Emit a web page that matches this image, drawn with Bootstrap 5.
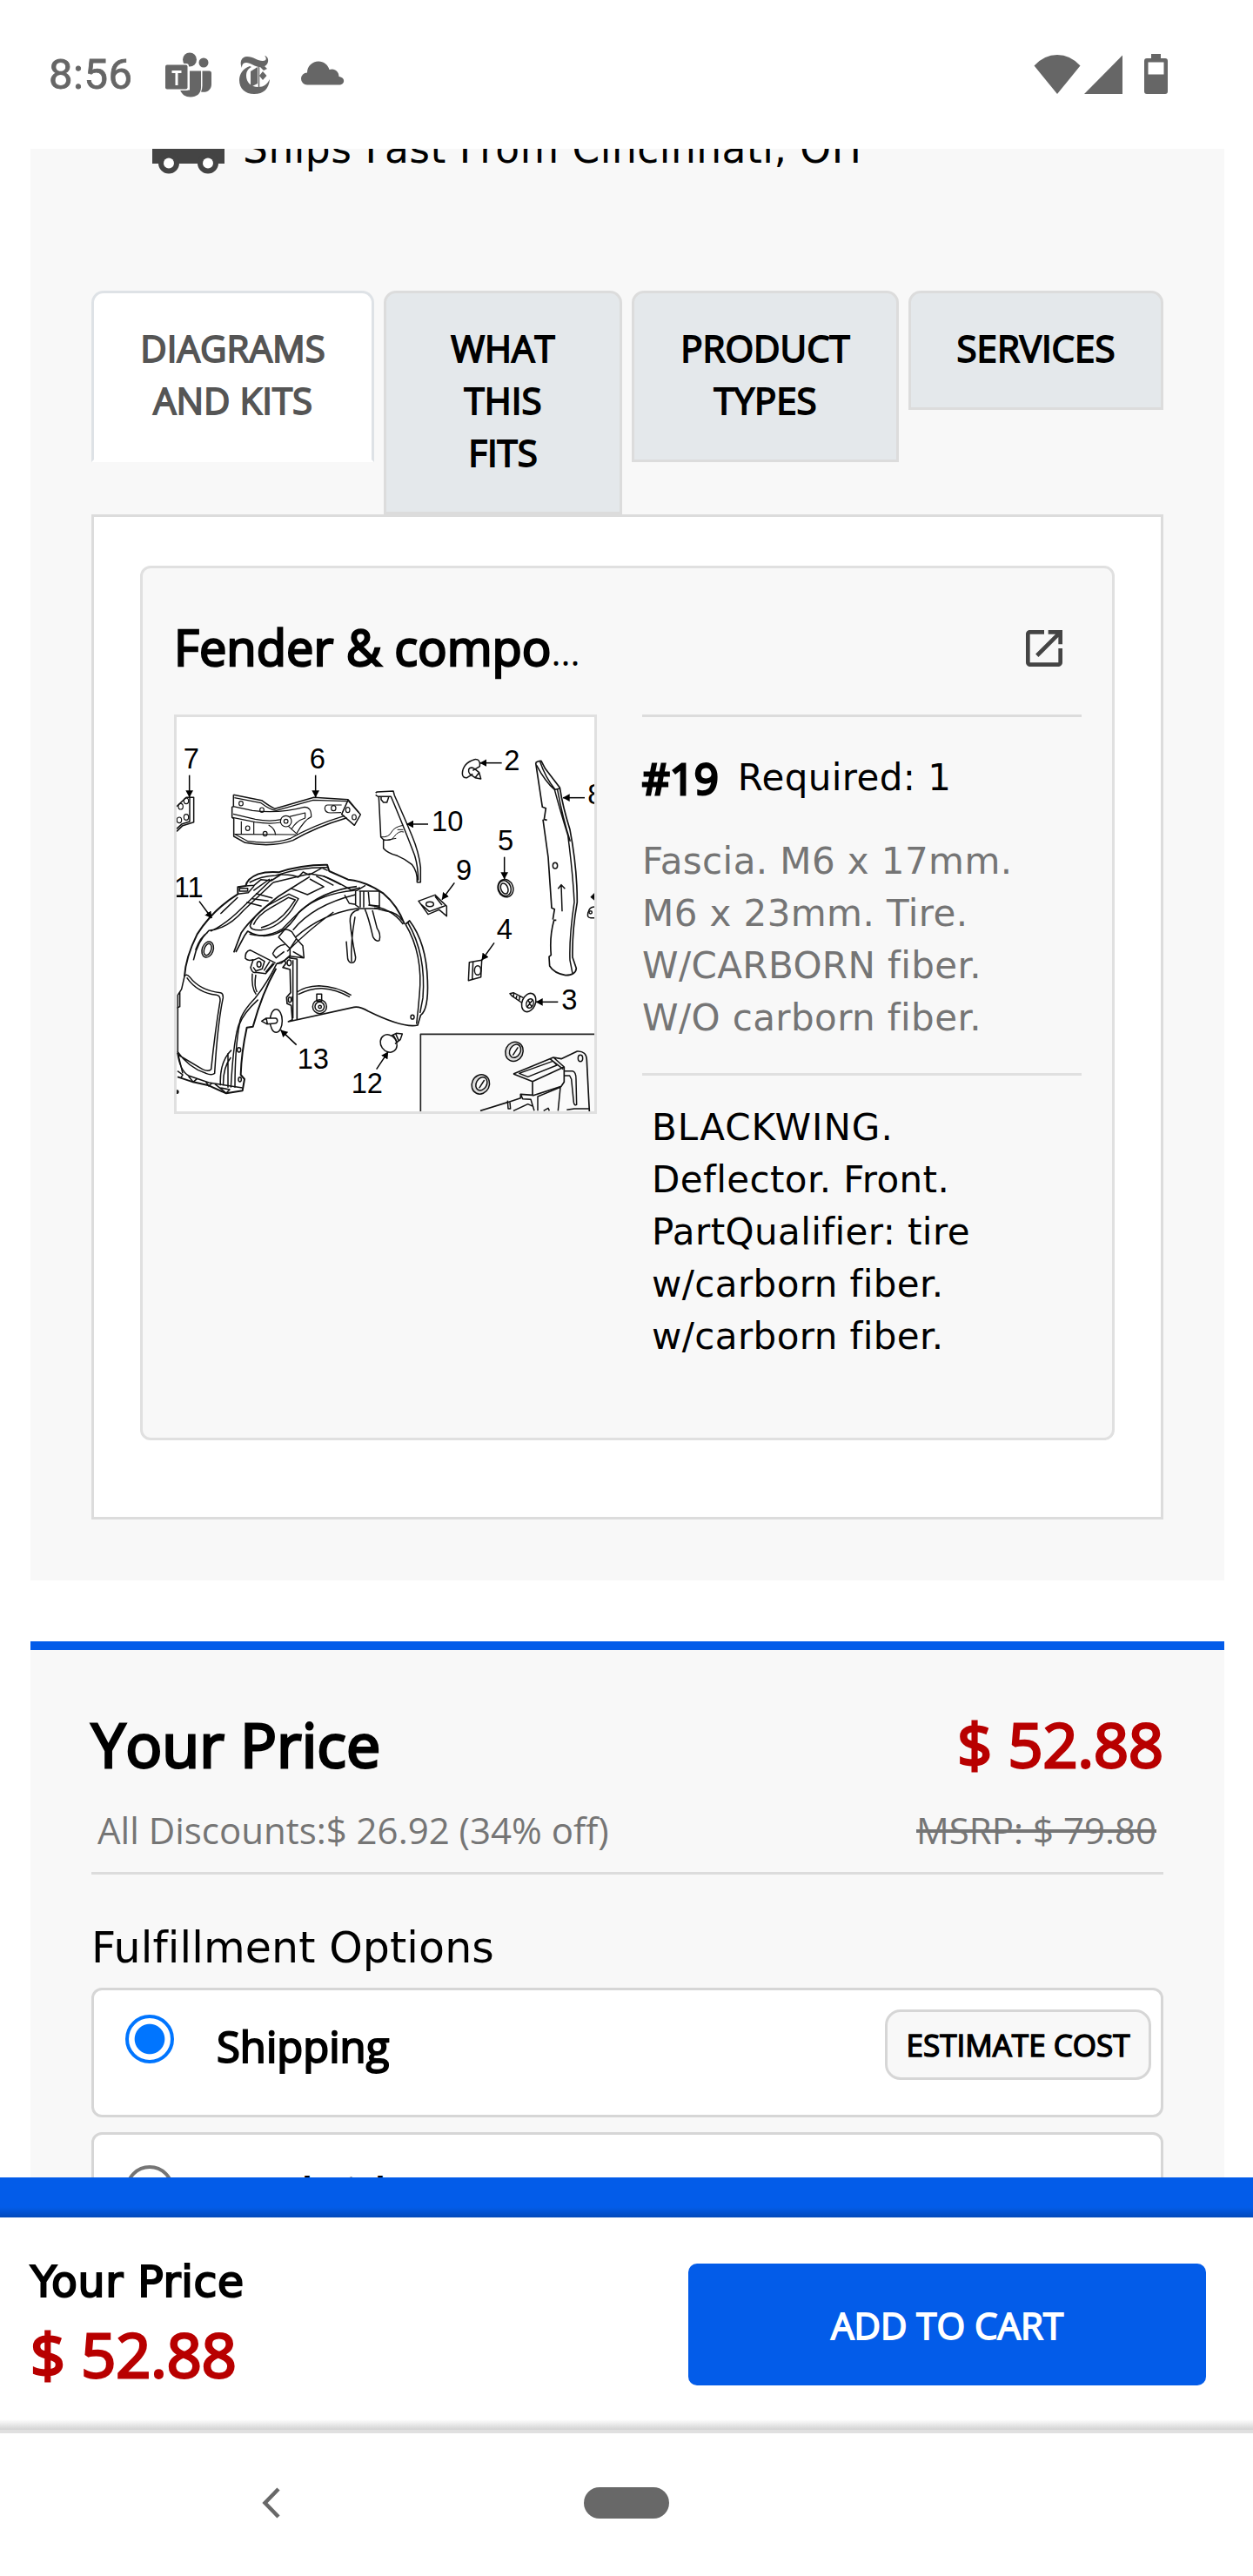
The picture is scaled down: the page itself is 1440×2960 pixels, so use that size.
<!DOCTYPE html>
<html lang="en">

<head>
    <meta charset="UTF-8">
    <meta name="viewport" content="width=device-width, initial-scale=1.0">
    <title>Part Details</title>
    <link href="https://cdn.jsdelivr.net/npm/bootstrap@5.3.3/dist/css/bootstrap.min.css" rel="stylesheet">
    <script src="https://cdn.jsdelivr.net/npm/bootstrap@5.3.3/dist/js/bootstrap.bundle.min.js"></script>

    <style>
        body {
            width: 1440px;
            height: 2960px;
            overflow: hidden;
            color: #000;
            background-color: #fff;
            font-family: "DejaVu Sans", sans-serif;
            font-size: 42px;
            line-height: 60px;
        }

        svg {
            display: block;
            flex-shrink: 0;
        }

        .heavy {
            font-family: "Open Sans", sans-serif;
            font-weight: 400;
            letter-spacing: 0;
            -webkit-text-stroke: 0.042em currentColor;
        }

        .status-bar {
            height: 171px;
            padding: 0 98px 0 56px;
            color: #666;
        }

        .clock {
            font-family: Roboto, sans-serif;
            font-size: 49px;
            line-height: 60px;
            letter-spacing: 0.5px;
            margin-top: 56px;
            width: 134px;
            -webkit-text-stroke: 0.8px currentColor;
        }

        .teams-icon { margin-top: 60px; }
        .times-icon { margin: 63px 0 0 31px; }
        .cloud-icon { margin: 70px 0 0 35px; }
        .signal-icons { margin-top: 62px; }
        .cell-icon { margin-left: 4px; }
        .battery-icon { margin-left: 24px; }

        .panel-gray {
            background-color: #f8f8f8;
            margin-left: 35px;
            width: 1372px;
            padding: 0 70px;
            overflow: hidden;
        }

        .product {
            height: 1645px;
        }

        .ships {
            margin-top: -29px;
            padding-left: 70px;
            gap: 21px;
            font-size: 45.5px;
            letter-spacing: 0.5px;
        }

        .part-tabs {
            margin-top: 132px;
            height: 257px;
            border: 0;
            gap: 11px;
        }

        .part-tabs .nav-link {
            margin: 0;
            border: 3px solid #dcdcdc;
            border-radius: 14px 14px 0 0;
            padding: 33px 0 38px;
            background-color: #e4e8eb;
            color: #000;
            text-align: center;
        }

        .part-tabs .nav-link.active {
            background-color: #fff;
            border-bottom-color: #fff;
            color: #555;
        }

        .tab-a { width: 325px; }
        .tab-b { width: 274px; }
        .tab-c { width: 307px; }
        .tab-d { width: 293px; }

        .tab-panel {
            height: 1155px;
            border: 3px solid #dcdcdc;
            padding: 56px 53px;
            background-color: #fff;
        }

        .diagram-card {
            height: 1005px;
            border: 3px solid #e0e0e0;
            border-radius: 12px;
            background-color: #f8f8f8;
            padding: 52px 35px 0 36px;
        }

        .diagram-title {
            font-size: 56px;
            line-height: 76px;
            height: 78px;
        }

        .dots {
            font-size: 42px;
            line-height: 1;
            -webkit-text-stroke: 0;
        }

        .open-icon {
            margin: 12px 15px 0 0;
        }

        .diagram-body {
            margin-top: 38px;
            gap: 52px;
        }

        .diagram {
            border: 3px solid #e0e0e0;
            background-color: #fff;
            width: 486px;
            height: 459px;
        }

        .diagram text {
            font-family: "Liberation Sans", sans-serif;
            font-size: 98px;
            fill: #000;
            stroke: none;
        }

        .specs {
            width: 505px;
            border-top: 3px solid #dcdcdc;
            letter-spacing: 0.4px;
        }

        .callout {
            margin-top: 40px;
            gap: 22px;
        }

        .callout .heavy {
            font-size: 49px;
            -webkit-text-stroke-width: 0.06em;
        }

        .gray-text {
            color: #757575;
        }

        .notes {
            margin-top: 36px;
            padding-bottom: 33px;
            border-bottom: 3px solid #e0e0e0;
        }

        .qualifiers {
            margin-top: 30px;
            padding-left: 11px;
        }

        .wide {
            letter-spacing: 1px;
        }

        .pricing {
            margin-top: 70px;
            height: 616px;
            border-top: 10px solid #035ce9;
            padding-top: 60px;
        }

        .price-row {
            font-size: 70px;
            line-height: 96px;
        }

        .red {
            color: #b80000;
        }

        .discount-row {
            font-family: "Open Sans", sans-serif;
            margin-top: 21px;
            padding: 0 8px 18px 7px;
            border-bottom: 3px solid #dcdcdc;
        }

        .fulfillment {
            font-size: 49px;
            letter-spacing: 0.1px;
            margin: 55px 0 15px;
        }

        .ship-option {
            height: 149px;
            border: 3px solid #d6d6d6;
            border-radius: 12px;
            background-color: #fff;
            padding: 0 11px 0 36px;
            margin-bottom: 17px;
        }

        .radio {
            width: 56px;
            height: 56px;
            border: 4px solid #757575;
            border-radius: 50%;
            margin: 28px 49px 0 0;
        }

        .radio.checked {
            border-color: #0075ff;
            background: radial-gradient(circle, #0075ff 16.8px, #fff 17.8px);
        }

        .option-name {
            font-size: 49px;
            margin-top: 34px;
        }

        .estimate {
            margin: 22px 0 0 auto;
            width: 306px;
            height: 81px;
            border: 3px solid #d6d6d6;
            border-radius: 18px;
            padding: 0;
            background-color: #f8f8f8;
            color: #000;
            font-size: 35px;
            line-height: 75px;
        }

        .pickup .radio {
            margin-top: 35px;
        }

        .pickup .option-name {
            font-size: 45.5px;
            margin-top: 35px;
        }

        .blue-band {
            height: 46px;
            background-color: #035ce9;
            background-image: linear-gradient(to top, rgba(0, 0, 0, .2), rgba(0, 0, 0, 0) 12px);
        }

        .cart-bar {
            height: 248px;
            padding: 40px 54px 0 35px;
            border-bottom: 4px solid #e0e0e0;
            background: linear-gradient(to top, #d2d2d2, #fff 12px);
        }

        .cart-label {
            font-family: "DejaVu Sans", sans-serif;
            font-size: 49px;
            line-height: 70px;
            letter-spacing: 0.6px;
        }

        .cart-price {
            font-size: 70px;
            line-height: 90px;
            margin-top: 2px;
        }

        .add-btn {
            width: 595px;
            height: 140px;
            margin-top: 13px;
            border: 0;
            border-radius: 10px;
            background-color: #035ce9;
            color: #fff;
            font-size: 42px;
            line-height: 60px;
            padding: 2px 0 0;
        }

        .android-nav {
            height: 164px;
            padding: 62px 0 0 301px;
            gap: 349px;
        }

        .pill {
            width: 98px;
            height: 36px;
            border-radius: 18px;
            background-color: #686868;
        }
    </style>

</head>

<body>

    <div class="status-bar d-flex align-items-start">
        <div class="clock">8:56</div>
        <!-- Teams -->
        <svg class="teams-icon" width="54" height="52" viewBox="0 0 54 52" fill="#666">
            <circle cx="28" cy="8.500" r="8" />
            <circle cx="44" cy="12" r="5.500" />
            <path d="M28 21.500h13v19c0 7-5 11-12 11-6 0-10-3-12-8h11z" />
            <path d="M42.500 21.500h8q2.500 0 2.500 2.500v13c0 6-5 10-12 8.500q1.500-3 1.500-7z" />
            <rect x="-1" y="13" width="28" height="31" rx="3" fill="#fff" />
            <rect x="0" y="14.500" width="25.500" height="28" rx="2" />
            <path d="M7.500 22.500h11M13 22.500v15.500" stroke="#fff" stroke-width="3" />
        </svg>
        <!-- Times -->
        <svg class="times-icon" width="36" height="46" viewBox="0 0 36 46" fill="#666">
            <path d="M3 15C0 9 2 2 9 2c7 0 12 5 18 5 4 0 5-3 2-6 6 1 6 12-3 13C19 15 13 9 8 9c-4 0-5 3-5 6z" />
            <path d="M12 13C4 16 0 22 0 29c0 10 7 16 17 16 11 0 17-6 18-17-3 6-7 9-13 9C13 37 8 31 8 24c0-5 2-8 6-10z" />
            <path d="M13 19l8-5v19l-8 4z" />
            <path d="M22.500 14v24" stroke="#666" stroke-width="1.500" />
            <path d="M27 19l4.500 5-4.500 5-4-5zM24 14l5-1 3 3-4 2z" />
        </svg>
        <svg class="cloud-icon" width="50" height="28" viewBox="0 0 50 28" fill="#666">
            <path d="M7 27.500a7 7 0 0 1 0-14C7 6 13 .5 20 .5c6 0 11 4 12.500 9.500 6-2 11 2 11 8 8 1 7 9.500 0 9.500z" />
        </svg>
        <div class="signal-icons d-flex ms-auto">
            <svg width="54" height="48" viewBox="0 0 54 48" fill="#666">
                <path d="M.5 13.500Q12 1 27 1t26.500 12.500L27 46z" />
            </svg>
            <svg class="cell-icon" width="45" height="48" viewBox="0 0 45 48" fill="#666">
                <path d="M0 46L44 1.500V46z" />
            </svg>
            <svg class="battery-icon" width="27" height="48" viewBox="0 0 27 48" fill="#666">
                <path fill-rule="evenodd"
                    d="M8 0h11v5h5q3 0 3 3v35q0 3-3 3H3q-3 0-3-3V8q0-3 3-3h5zM4.500 9.500v14h18v-14z" />
            </svg>
        </div>
    </div>

    <div class="panel-gray product">
        <div class="ships d-flex">
            <svg width="83" height="60" viewBox="0 0 83 60">
                <path d="M0 3h52v8h16l15 16v19H0z" fill="#444" />
                <circle cx="19" cy="45.500" r="12" fill="#444" />
                <circle cx="64" cy="45.500" r="12" fill="#444" />
                <circle cx="19" cy="45.500" r="6" fill="#fff" />
                <circle cx="64" cy="45.500" r="6" fill="#fff" />
            </svg>
            <div class="text-nowrap">Ships Fast From Cincinnati, OH</div>
        </div>

        <div class="nav nav-tabs part-tabs align-items-start flex-nowrap">
            <a class="nav-link active heavy tab-a">DIAGRAMS<br>AND KITS</a>
            <a class="nav-link heavy tab-b">WHAT<br>THIS<br>FITS</a>
            <a class="nav-link heavy tab-c">PRODUCT<br>TYPES</a>
            <a class="nav-link heavy tab-d">SERVICES</a>
        </div>

        <div class="tab-panel">
            <div class="diagram-card">
                <div class="d-flex justify-content-between align-items-start">
                    <div class="diagram-title heavy">Fender &amp; compo<span class="dots">...</span></div>
                    <svg class="open-icon" width="56" height="56" viewBox="0 0 24 24" fill="#444">
                        <path
                            d="M19 19H5V5h7V3H5c-1.110 0-2 .9-2 2v14c0 1.100.890 2 2 2h14c1.100 0 2-.9 2-2v-7h-2v7zM14 3v2h3.590l-9.830 9.830 1.410 1.410L19 6.410V10h2V3h-7z" />
                    </svg>
                </div>

                <div class="diagram-body d-flex align-items-start">
                    <div class="diagram">
                        <svg width="480" height="453" viewBox="39 42 1440 1359" preserveAspectRatio="none"
                            fill="none" stroke="#111" stroke-width="4.500" stroke-linejoin="round">
                            <defs>
                                <marker id="tip" viewBox="0 0 24 26" refX="23" refY="13" markerWidth="24"
                                    markerHeight="26" markerUnits="userSpaceOnUse" orient="auto">
                                    <path d="M0 0L24 13L0 26z" fill="#000" stroke="none" />
                                </marker>
                            </defs>

                            <!-- 7: bracket -->
                            <path d="M39 350L72 319H98V404L60 416L39 436M84 320V402L58 410L39 427" />
                            <g stroke-width="3.500">
                                <ellipse cx="72" cy="331" rx="8" ry="10" />
                                <ellipse cx="53" cy="350" rx="8" ry="10" />
                                <ellipse cx="72" cy="387" rx="8" ry="10" />
                                <ellipse cx="48" cy="397" rx="8" ry="10" />
                            </g>

                            <!-- 6: rail -->
                            <path d="M235 310L332 329Q360 350 378 358L512 319L630 326L673 378L652 415L608 377L630 328" />
                            <path d="M235 310V350L230 352V388L236 392V453L275 475Q370 492 440 467Q520 420 626 389" />
                            <g stroke-width="3.500">
                                <path d="M238 320L330 338Q362 362 382 364L510 328L626 332M238 445L285 470Q370 482 432 460Q510 415 618 382" />
                                <path d="M234 350L300 364Q390 376 480 352Q504 352 503 386Q480 395 452 444M234 376L310 394Q360 404 400 395M232 388L310 404Q360 412 398 405M428 385L482 372V390Q450 400 434 430M424 418L455 446M240 446L450 447" />
                                <path d="M262 401V446M305 405V446M356 414Q378 426 380 448M608 345H560Q550 345 550 358Q552 372 570 372L606 371M630 330L668 372" />
                                <circle cx="416" cy="401" r="19" />
                                <circle cx="416" cy="401" r="7" />
                                <ellipse cx="261" cy="340" rx="7" ry="8" />
                                <ellipse cx="333" cy="362" rx="7" ry="8" />
                                <ellipse cx="284" cy="425" rx="7" ry="8" />
                                <ellipse cx="344" cy="444" rx="7" ry="8" />
                                <ellipse cx="580" cy="356" rx="8" ry="9" />
                                <ellipse cx="629" cy="362" rx="7" ry="9" />
                                <ellipse cx="651" cy="387" rx="7" ry="9" />
                            </g>

                            <!-- 11: liner, outer shell -->
                            <path stroke-width="6" d="M66 936Q70 870 110 790Q165 705 250 652V628L277 624Q282 598 320 583Q350 574 390 577Q470 550 558 551L565 573L630 602Q690 607 752 650Q800 690 825 756" />
                            <path d="M277 624L306 622L330 602L365 606L398 585Q440 584 458 594L475 576L496 586L540 562L560 571M290 612Q330 590 380 588Q470 558 558 560" />
                            <path d="M250 652L286 647L306 624M256 632H284V642H256zM97 880Q110 815 150 778Q215 772 270 708L372 612M104 845Q120 800 146 784M156 780Q210 755 262 702L368 600M190 720L250 663" />
                            <path d="M66 936L56 980L43 1000V1200L60 1270M40 1045L50 1040V990" />
                            <path d="M372 612L498 582L545 590Q580 602 640 638L672 630M304 640L360 600M280 680L332 694M300 668L356 676M312 650L370 666" />
                            <path stroke-width="5" d="M236 853L262 785Q300 730 390 660L498 592M243 852L274 794L284 780Q340 812 400 780Q430 764 460 716Q540 640 660 626" />
                            <path d="M292 762Q300 730 352 692L426 652L459 668L436 706Q390 770 330 776Q296 778 292 762zM304 758Q318 725 362 700L424 664L448 672L428 700Q390 752 330 768" />
                            <path d="M432 632L490 654L548 626M498 600L545 626M520 590L580 622M545 590L606 620M290 790Q350 805 404 772Q440 735 470 706Q540 650 650 640M440 776Q510 690 656 654M450 800Q540 720 660 702H740M420 850Q500 770 580 714" />
                            <path d="M656 640V690L668 698M668 642H738V700M672 642V698M684 642V698M700 645L704 690L740 694M618 655L634 684L656 688M640 638L660 640L690 622" />
                            <ellipse cx="146" cy="843" rx="19" ry="28" transform="rotate(20 146 843)" />
                            <ellipse cx="146" cy="843" rx="12" ry="21" transform="rotate(20 146 843)" />
                            <path d="M390 800L410 776Q420 770 436 782L452 806L474 830L478 872L430 866L412 880L384 892Q350 960 310 1010Q262 1060 256 1095Q236 1140 226 1319M390 800L430 840L452 806M430 840V866M440 850L474 870M370 858Q382 830 412 826M370 858L382 872L410 850" />
                            <path d="M380 890L292 845Q274 850 276 874Q284 884 303 878L294 905Q300 925 310 922L346 926L376 892M340 916L360 884M346 922L372 890M303 880L322 872L342 884L334 910L312 917L303 904M300 926Q296 975 313 998M312 930Q305 970 316 990" />
                            <ellipse cx="323" cy="894" rx="7" ry="10" />
                            <path stroke-width="6" d="M382 908Q335 990 302 1109L281 1112Q262 1200 260 1275L273 1290L266 1330L210 1339L150 1312L96 1300L42 1282" />
                            <path d="M384 892L400 890L432 862M240 1319Q240 1180 256 1100Q270 1062 320 1016M190 1312Q186 1230 228 1190M200 1312Q198 1250 226 1215M216 1319V1200" />
                            <path d="M66 936Q72 925 84 938Q120 985 190 992Q200 994 199 1010Q180 1100 170 1270Q160 1278 140 1270Q80 1250 42 1195M74 940Q110 992 176 1000Q190 1002 189 1020Q172 1120 158 1256Q148 1266 128 1256L44 1206" />
                            <path d="M42 1200Q50 1260 80 1278L150 1302L266 1320M42 1262L60 1275L54 1285M80 1280L96 1300L110 1288M140 1300L150 1314L160 1304M170 1306L210 1338L222 1326L190 1320" />
                            <ellipse cx="254" cy="1189" rx="6" ry="8" />
                            <ellipse cx="257" cy="1291" rx="5" ry="8" />
                            <circle cx="40" cy="1334" r="5" fill="#222" />

                            <!-- 11: liner, inner side -->
                            <path d="M410 880L416 890L405 905L430 912L432 992L418 1008L420 1030L434 1036L438 1085L424 1092L650 1042Q670 1038 700 1056Q820 1115 870 1104L880 1070Q908 1050 904 950Q900 820 842 744L828 756M426 872L454 876V1086M438 1004V1022" stroke-width="5" />
                            <path d="M440 880V1080M828 756Q890 860 876 1000Q872 1050 866 1100M836 750Q900 860 888 1010L878 1062M820 756Q780 700 700 690" />
                            <path d="M454 990Q480 970 530 968Q590 970 641 1001M458 998Q500 976 540 977Q590 980 636 1007" />
                            <rect x="522" y="997" width="17" height="24" />
                            <circle cx="532" cy="1040" r="24" />
                            <circle cx="532" cy="1040" r="16" />
                            <circle cx="533" cy="1041" r="5" />
                            <ellipse cx="427" cy="889" rx="7" ry="10" />
                            <ellipse cx="429" cy="1016" rx="5" ry="9" />
                            <ellipse cx="852" cy="1076" rx="6" ry="7" />
                            <path d="M668 706Q636 712 637 745Q640 790 656 870Q656 890 640 889Q628 886 628 865L624 815M654 730Q638 820 642 885M688 704Q700 730 716 800Q726 818 738 812Q744 790 730 770L714 708M720 700L760 710Q800 715 816 742" />

                            <!-- 13, 12: clips -->
                            <ellipse cx="382" cy="1089" rx="21" ry="40" />
                            <path d="M332 1090L348 1080H380Q388 1082 386 1092Q384 1098 376 1098L350 1100zM348 1080L352 1100" fill="#fff" />
                            <ellipse cx="770" cy="1167" rx="27" ry="32" transform="rotate(-35 770 1167)" />
                            <path d="M780 1140L796 1132L817 1134L810 1154L792 1168M794 1133L804 1156M786 1138L798 1160" />

                            <!-- Right half of the sheet -->
                            <g transform="translate(720 0)">
                                <!-- 10 -->
                                <path d="M5 303L10 300L66 297L70 312Q105 390 130 450Q155 510 160 560V611H148Q150 575 130 550Q105 530 80 520Q45 510 32 494V464L23 455L16 318L5 310M14 316H58Q110 440 140 520Q152 560 152 605M24 318V326L32 336H44L50 318" />
                                <path d="M23 455Q50 458 60 438Q70 420 100 415M32 464Q60 472 68 455Q85 432 102 438M80 430H100M30 468L76 460" stroke-width="3" />
                                <!-- 2 -->
                                <path d="M304 236Q306 200 346 188Q368 186 364 212L340 226M304 236Q304 252 320 251L340 238" />
                                <path d="M326 222Q332 212 346 220L362 233L368 255L348 251L330 238Q324 230 326 222zM362 233L348 251" />
                                <!-- 8 -->
                                <path stroke-width="5" d="M557 200Q560 194 576 193L590 220L640 285Q650 350 675 430Q700 560 700 680Q682 780 684 870L697 908Q695 932 660 932Q620 925 605 900L603 868L610 862Q604 800 620 742L628 742M557 200L580 352L592 356L586 395L596 397M582 395L600 525L612 700L622 704L616 740" />
                                <path d="M572 196Q590 250 624 292L640 288M560 208Q590 265 622 292Q640 360 668 450Q685 580 690 680Q672 800 675 880L684 926M632 292Q650 390 676 470" />
                                <ellipse cx="624" cy="554" rx="8" ry="10" />
                                <path d="M648 712L645 622M634 634L645 620L658 634" />
                                <!-- 9 -->
                                <path d="M153 676L210 655L250 694V728L224 706L186 722zM158 684L190 712L246 692M210 660L234 690" />
                                <ellipse cx="192" cy="687" rx="13" ry="8" />
                                <!-- 5 -->
                                <ellipse cx="453" cy="632" rx="26" ry="31" transform="rotate(-20 453 632)" />
                                <ellipse cx="450" cy="632" rx="21" ry="27" transform="rotate(-20 450 632)" />
                                <ellipse cx="449" cy="633" rx="12" ry="19" transform="rotate(-20 449 633)" />
                                <!-- 4 -->
                                <path d="M328 887L371 880L368 938L325 950zM341 886L338 946" />
                                <ellipse cx="357" cy="915" rx="11" ry="16" />
                                <!-- 3 -->
                                <ellipse cx="533" cy="1026" rx="23" ry="33" transform="rotate(22 533 1026)" />
                                <ellipse cx="537" cy="1029" rx="12" ry="16" transform="rotate(22 537 1029)" />
                                <path d="M530 1016L544 1042M546 1018L528 1040M515 1010L480 992L468 995L476 1004L508 1026M482 993L480 1006M492 998L490 1012M502 1003L500 1018" />
                                <!-- edge part -->
                                <path d="M760 696Q742 696 738 715Q732 735 748 734H760" />
                                <circle cx="746" cy="715" r="5" />
                                <path d="M748 662L760 650V672z" fill="#000" />

                                <!-- inset -->
                                <path d="M160 1410V1135H770V1410z" fill="#fafafa" stroke="#222" stroke-width="5" />
                                <g fill="#ddd">
                                    <ellipse cx="483" cy="1195" rx="30" ry="34" transform="rotate(25 483 1195)" />
                                    <ellipse cx="367" cy="1308" rx="30" ry="34" transform="rotate(25 367 1308)" />
                                </g>
                                <g fill="#fafafa">
                                    <ellipse cx="486" cy="1193" rx="18" ry="24" transform="rotate(30 486 1193)" />
                                    <ellipse cx="370" cy="1306" rx="18" ry="24" transform="rotate(30 370 1306)" />
                                </g>
                                <path d="M478 1208L496 1180M362 1321L380 1293" />
                                <path stroke-width="5" d="M480 1272L618 1215L645 1220L700 1194Q732 1192 733 1225L742 1401M480 1272L546 1298V1345L505 1342V1355L460 1370L366 1399M546 1298L655 1248L618 1215M655 1248V1300L645 1315L546 1347" />
                                <path d="M500 1270L616 1228L630 1242L530 1282zM606 1220L652 1256M656 1262H684Q696 1264 696 1290L698 1378Q690 1382 688 1370L680 1290L674 1278H656M505 1342L512 1358L540 1360L552 1399M460 1364L462 1392L470 1392L468 1370M480 1399L530 1376L550 1385M564 1399V1350L642 1318L634 1399M664 1396L690 1392H742M584 1399L600 1390L604 1399" />
                                <ellipse cx="711" cy="1218" rx="8" ry="11" />
                            </g>

                            <!-- callout arrows -->
                            <g stroke="#000" marker-end="url(#tip)">
                                <path d="M83 242V318" />
                                <path d="M518 242V318" />
                                <path d="M117 677L160 735" />
                                <path d="M452 1172L398 1121" />
                                <path d="M728 1256L768 1196" />
                                <path d="M1160 200H1085" />
                                <path d="M906 411H832" />
                                <path d="M1446 320H1371" />
                                <path d="M1169 524V600" />
                                <path d="M997 613L954 671" />
                                <path d="M1134 820L1091 880" />
                                <path d="M1354 1024H1278" />
                            </g>
                            <text x="62" y="219">7</text>
                            <text x="497" y="219">6</text>
                            <text x="29" y="663">11</text>
                            <text x="455" y="1254">13</text>
                            <text x="641" y="1338">12</text>
                            <text x="1168" y="225">2</text>
                            <text x="918" y="435">10</text>
                            <text x="1456" y="342">8</text>
                            <text x="1146" y="500">5</text>
                            <text x="1002" y="602">9</text>
                            <text x="1142" y="806">4</text>
                            <text x="1366" y="1049">3</text>
                        </svg>
                    </div>

                    <div class="specs">
                        <div class="callout d-flex align-items-center">
                            <span class="heavy">#19</span>
                            <span>Required: 1</span>
                        </div>
                        <div class="notes gray-text">
                            Fascia. M6 x 17mm.<br>M6 x 23mm. Tire.<br>W/CARBORN fiber.<br>W/O carborn fiber.
                        </div>
                        <div class="qualifiers">
                            <span class="wide">BLACKWING.</span><br>Deflector. Front.<br>PartQualifier: tire<br>w/carborn fiber.<br>w/carborn fiber.
                        </div>
                    </div>
                </div>
            </div>
        </div>
    </div>

    <div class="panel-gray pricing">
        <div class="price-row heavy d-flex justify-content-between">
            <div>Your Price</div>
            <div class="red">$ 52.88</div>
        </div>
        <div class="discount-row gray-text d-flex justify-content-between">
            <div>All Discounts:$ 26.92 (34% off)</div>
            <div class="text-decoration-line-through">MSRP: $ 79.80</div>
        </div>

        <div class="fulfillment">Fulfillment Options</div>
        <div class="ship-option d-flex align-items-start">
            <div class="radio checked"></div>
            <div class="option-name heavy">Shipping</div>
            <button class="btn estimate heavy">ESTIMATE COST</button>
        </div>
        <div class="ship-option pickup d-flex align-items-start">
            <div class="radio"></div>
            <div class="option-name heavy">Local Pickup</div>
        </div>
    </div>

    <div class="blue-band"></div>
    <div class="cart-bar d-flex justify-content-between align-items-start">
        <div>
            <div class="cart-label heavy">Your Price</div>
            <div class="cart-price heavy red">$ 52.88</div>
        </div>
        <button class="btn add-btn heavy">ADD TO CART</button>
    </div>

    <div class="android-nav d-flex align-items-start">
        <svg width="21" height="36" viewBox="0 0 21 36" fill="none" stroke="#686868" stroke-width="4.500">
            <path d="M19 2L3.500 18L19 34" />
        </svg>
        <div class="pill"></div>
    </div>

</body>

</html>
